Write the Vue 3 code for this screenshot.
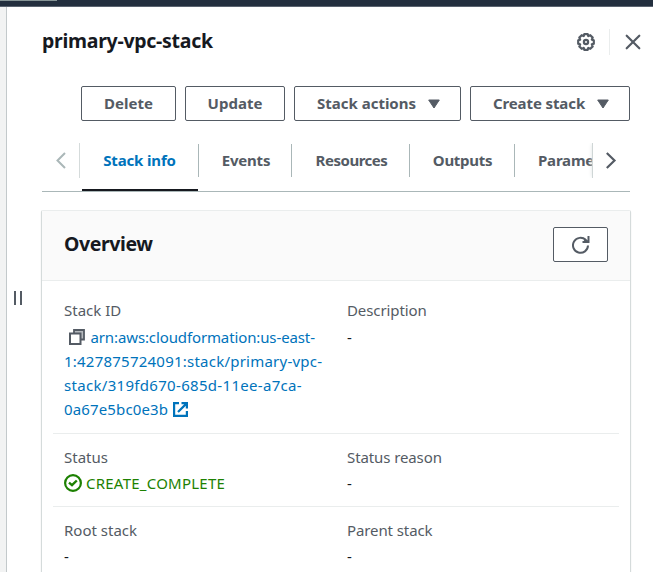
<script setup>
const tabs = [
  { label: 'Stack info', key: 'info', active: true },
  { label: 'Events', key: 'events' },
  { label: 'Resources', key: 'resources' },
  { label: 'Outputs', key: 'outputs' },
  { label: 'Parameters', key: 'parameters' },
]
const arn = [
  'arn:aws:cloudformation:us-east-',
  '1:427875724091:stack/primary-vpc-',
  'stack/319fd670-685d-11ee-a7ca-',
  '0a67e5bc0e3b',
]
</script>

<template>
  <div class="page">
    <div class="topbar"><div class="progress"></div></div>
    <div class="body">
      <div class="gutter"></div>
      <div class="handle"><i></i><i></i></div>
      <main class="panel">
        <header class="head">
          <h1>primary-vpc-stack</h1>
          <svg class="gear" viewBox="0 0 18 18" width="18" height="18" fill="none" stroke="#545b64">
            <path stroke-width="2.200" stroke-linejoin="round" d="M7.300 1.200h3.400l.6 1.900 2-.9 2.400 2.400-.9 2 2 .7v3.400l-2 .7.9 2-2.400 2.400-2-.9-.6 1.900H7.300l-.6-1.900-2 .9-2.400-2.400.9-2-2-.7V7.300l2-.7-.9-2 2.400-2.400 2 .9z" />
            <circle cx="9" cy="9" r="2.100" stroke-width="2.200" />
          </svg>
          <span class="head-line"></span>
          <svg class="close" viewBox="0 0 16 16" width="16" height="16" fill="none" stroke="#545b64" stroke-width="2.200" stroke-linecap="round">
            <path d="M1.700 1.700l12.600 12.600M14.300 1.700L1.700 14.300" />
          </svg>
        </header>

        <div class="actions">
          <button class="b-delete"><span>Delete</span></button>
          <button class="b-update"><span>Update</span></button>
          <button class="b-actions"><span>Stack actions</span><svg viewBox="0 0 12 10" width="12" height="10"><path fill="#545b64" stroke="#545b64" stroke-linejoin="round" d="M.7 1h10.600L6 9z" /></svg></button>
          <button class="b-create"><span>Create stack</span><svg viewBox="0 0 12 10" width="12" height="10"><path fill="#545b64" stroke="#545b64" stroke-linejoin="round" d="M.7 1h10.600L6 9z" /></svg></button>
        </div>

        <nav class="tabs">
          <div class="prev">
            <svg viewBox="0 0 10 17" width="10" height="17" fill="none" stroke="#aab7b8" stroke-width="2"><path d="M9 1L1.500 8.500 9 16" /></svg>
          </div>
          <div class="tab-list">
            <div v-for="t in tabs" :key="t.key" class="tab" :class="['t-' + t.key, { active: t.active }]"><span>{{ t.label }}</span></div>
          </div>
          <div class="next">
            <svg viewBox="0 0 11 17" width="11" height="17" fill="none" stroke="#545b64" stroke-width="2.200"><path d="M.8 1l7.700 7.500L.8 16" /></svg>
          </div>
        </nav>

        <section class="card">
          <div class="card-head">
            <h2>Overview</h2>
            <button class="refresh">
              <svg viewBox="0 0 18 18" width="18" height="18" fill="none" stroke="#545b64" stroke-width="2"><path d="M16 9.500A7.500 7.500 0 1 1 13.800 4" /><path d="M16.500 0v6h-6" /><path d="M12.500 3.500L16 6" stroke-width="2.500" /></svg>
            </button>
          </div>
          <div class="rows">
            <div class="row r-id">
              <div class="cell">
                <div class="label l-id">Stack ID</div>
                <div class="arn">
                  <div class="line a0"><svg class="copy" viewBox="0 0 16 16" width="16" height="16" fill="none"><path fill="#b5b9bd" stroke="#545b64" stroke-width="1.800" d="M5 1h10v9.500H5z" /><path fill="#fff" stroke="#545b64" stroke-width="2" d="M1 4.500h10.500V15H1z" /></svg><span>{{ arn[0] }}</span></div>
                  <div class="line a1"><span>{{ arn[1] }}</span></div>
                  <div class="line a2"><span>{{ arn[2] }}</span></div>
                  <div class="line a3"><span>{{ arn[3] }}</span><svg class="ext" viewBox="0 0 15 15" width="15" height="15" fill="none" stroke="#0073bb" stroke-width="2.200"><path d="M6 1.100H1.100v12.800h12.800V9M8.500 1.100h5.400v5.400M13.900 1.100L5 10" /></svg></div>
                </div>
              </div>
              <div class="cell">
                <div class="label l-desc">Description</div>
                <div class="value">-</div>
              </div>
            </div>
            <div class="row r-status">
              <div class="cell">
                <div class="label l-status">Status</div>
                <div class="status"><svg viewBox="0 0 18 18" width="18" height="18" fill="none" stroke="#1d8102" stroke-width="2.200"><circle cx="9" cy="9" r="7.900" /><path d="M5 8.700l3 2.500 4.800-4.700" stroke-width="2.400" /></svg><span>CREATE_COMPLETE</span></div>
              </div>
              <div class="cell">
                <div class="label l-reason">Status reason</div>
                <div class="value">-</div>
              </div>
            </div>
            <div class="row r-root">
              <div class="cell">
                <div class="label l-root">Root stack</div>
                <div class="value">-</div>
              </div>
              <div class="cell">
                <div class="label l-parent">Parent stack</div>
                <div class="value">-</div>
              </div>
            </div>
          </div>
        </section>
      </main>
    </div>
  </div>
</template>

<style>
body { background: #fff; overflow: hidden; }
</style>

<style scoped>
* { box-sizing: border-box; }
.page { width: 653px; height: 572px; overflow: hidden; display: flex; flex-direction: column; font-family: "Noto Sans", sans-serif; font-size: 15px; color: #16191f; background: #fff; }
svg { display: block; flex: none; }
.topbar { height: 7px; flex: none; background: #232f3e; border-bottom: 1px solid #5b6470; }
.progress { width: 57px; height: 1px; background: #879596; }
.body { display: flex; flex: 1; min-height: 0; }
.gutter { width: 7px; background: #f2f3f3; border-right: 1px solid #c3c9cb; }
.handle { width: 34px; display: flex; gap: 3.500px; padding: 284px 0 0 6.800px; }
.handle i { width: 2.500px; height: 14px; background: #545b64; }
.panel { width: 590px; display: flex; flex-direction: column; flex: none; }
.head { height: 70px; flex: none; display: flex; align-items: center; padding-left: 1px; margin-right: -10px; }
h1 { margin: 0 auto 2px 0; font-size: 19.500px; line-height: 28px; font-weight: 700; white-space: nowrap; letter-spacing: -.28px; }
.head-line { width: 1px; height: 26px; background: #eaeded; margin: 0 15px 0 14px; }
.actions { display: flex; gap: 9px; height: 35px; margin-top: 9px; padding-left: 40px; flex: none; }
button { display: flex; align-items: center; justify-content: center; height: 35px; padding: 0; border: 1px solid #545b64; border-radius: 2px; background: #fff; color: #545b64; font: 700 15px/20px "Noto Sans", sans-serif; white-space: nowrap; flex: none; }
button span { margin-bottom: 2px; }
button svg { margin-left: 12px; }
.b-delete { width: 95px; }
.b-update { width: 100px; }
.b-actions { width: 167px; padding-left: 2px; }
.b-create { width: 160px; padding-left: 2px; letter-spacing: -.1px; }
.tabs { display: flex; height: 49px; margin: 22px 1px 0; border-bottom: 1px solid #aab7b8; flex: none; }
.prev { width: 38px; height: 35px; padding: 9px 0 0 14px; border-right: 1px solid #d5dbdb; }
.tab-list { width: 512px; height: 49px; padding-left: 2px; display: flex; overflow: hidden; }
.tab { position: relative; height: 48px; display: flex; justify-content: center; padding-top: 7px; font-weight: 700; line-height: 20px; color: #545b64; flex: none; }
.tab::after { content: ""; position: absolute; right: 0; top: 1px; width: 1px; height: 33px; background: #aab7b8; }
.t-info { width: 117px; color: #0073bb; letter-spacing: -.15px; padding-right: 2px; }
.t-info::before { content: ""; position: absolute; left: 0; bottom: 0; width: 116px; height: 2px; background: #16191f; }
.t-events { width: 93px; letter-spacing: -.2px; padding-left: 1px; }
.t-resources { width: 118px; letter-spacing: -.48px; padding-left: 1px; }
.t-outputs { width: 105px; letter-spacing: -.3px; }
.t-parameters { width: 130px; justify-content: flex-start; padding-left: 23px; letter-spacing: -.2px; }
.next { width: 38px; height: 35px; padding: 9px 0 0 13px; border-left: 1px solid #cfd6d6; box-shadow: -1px 0 4px -1px #dfe4e4; background: #fff; clip-path: inset(0 0 0 -8px); }
.card { margin-top: 18px; height: 400px; border: 1px solid #d5dbdb; border-top-color: #eaeded; border-radius: 2px 2px 0 0; box-shadow: 0 1px 1px rgba(0, 28, 36, .2); flex: none; }
.card-head { height: 70px; background: #fafafa; border-bottom: 1px solid #eaeded; display: flex; justify-content: space-between; padding: 16px 22px 0; }
h2 { margin: 3px 0 0; font-size: 19.500px; line-height: 28px; letter-spacing: -.4px; }
.refresh { width: 55px; }
.refresh svg { margin: 0; }
.rows { padding: 0 11px; }
.row { display: grid; grid-template-columns: 283px 283px; padding: 0 11px; border-bottom: 1px solid #eaeded; }
.r-id { height: 153px; padding-top: 19px; }
.r-status, .r-root { height: 73px; padding-top: 13px; }
.cell { white-space: nowrap; }
.label { height: 20px; line-height: 20px; color: #545b64; }
.l-desc, .l-reason, .l-parent { letter-spacing: -.1px; }
.value { margin-top: 7px; line-height: 20px; }
.r-status .value, .r-root .value { margin-top: 6px; }
.arn { color: #0073bb; margin-top: 5px; }
.line { height: 24px; line-height: 24px; display: flex; align-items: center; }
.a0 { letter-spacing: -.12px; }
.a1 { letter-spacing: .23px; }
.a2 { letter-spacing: .31px; }
.a3 { letter-spacing: .14px; }
.copy { margin: 0 5.500px 0 5px; }
.ext { margin-left: 5px; }
.status { margin-top: 6px; height: 20px; line-height: 20px; display: flex; align-items: center; color: #1d8102; }
.status span { margin-left: 4px; letter-spacing: .24px; }
</style>
